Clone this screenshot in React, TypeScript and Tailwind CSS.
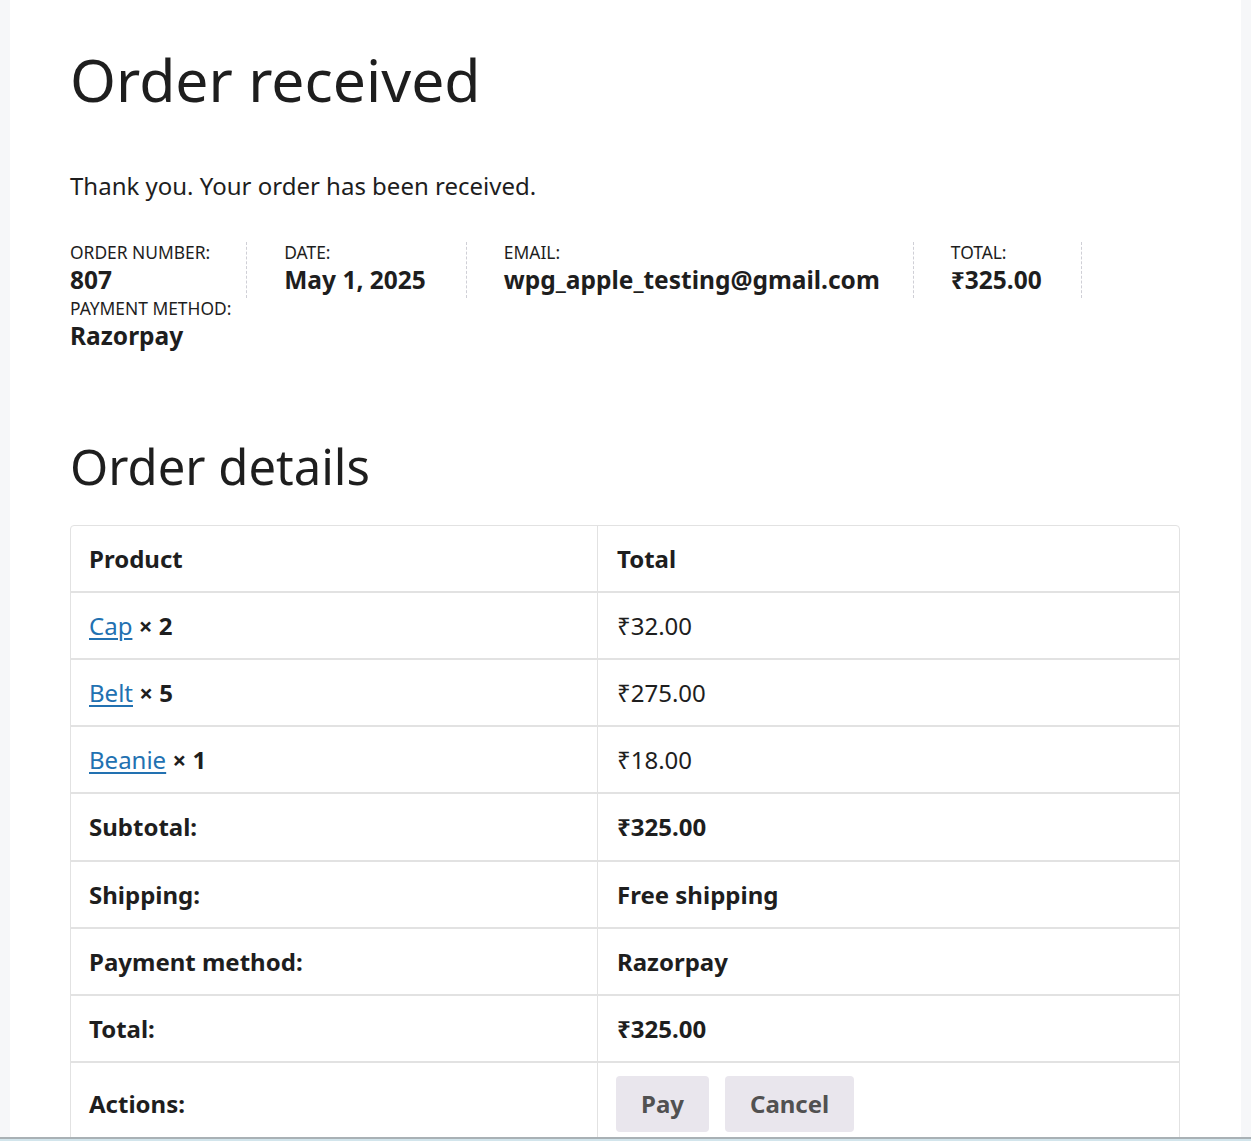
// Order received — WooCommerce-style thank-you page

const items = [
  { name: 'Cap', qty: 2, total: '₹32.00' },
  { name: 'Belt', qty: 5, total: '₹275.00' },
  { name: 'Beanie', qty: 1, total: '₹18.00' },
]

const totals = [
  { label: 'Subtotal:', value: '₹325.00', h: 'h-[68px]' },
  { label: 'Shipping:', value: 'Free shipping', h: 'h-[67px]' },
  { label: 'Payment method:', value: 'Razorpay', h: 'h-[67px]' },
  { label: 'Total:', value: '₹325.00', h: 'h-[67px]' },
]

const overview = [
  { label: 'Order number:', value: '807', space: 'pr-[36px] mr-[37px] border-r' },
  { label: 'Date:', value: 'May 1, 2025', space: 'pr-[40px] mr-[37px] border-r' },
  { label: 'Email:', value: 'wpg_apple_testing@gmail.com', space: 'pr-[33px] mr-[37px] border-r' },
  { label: 'Total:', value: '₹325.00', space: 'pr-[39px] mr-[37px] border-r' },
  { label: 'Payment method:', value: 'Razorpay', space: '' },
]

function OverviewItem({ label, value, space }: { label: string; value: string; space: string }) {
  return (
    <li className={'list-none border-dashed border-[#cfcfd6] ' + space}>
      <div className="text-[17.4px] leading-[20px] uppercase text-[#1e1e1e]">{label}</div>
      <div className="text-[24.5px] leading-[36px] font-bold text-[#1e1e1e]">{value}</div>
    </li>
  )
}

export default function App() {
  return (
    <div
      className="min-h-screen bg-[#f6f7f9] px-[10px] text-[#1e1e1e]"
      style={{ fontFamily: '"Noto Sans", "Open Sans", sans-serif' }}
    >
      <main className="bg-white min-h-screen pl-[60px] pr-[61px] pt-[44px] pb-10">
        <h1 className="text-[58.9px] leading-[70px] font-normal">Order received</h1>

        <p className="mt-[54px] text-[24px] leading-[36px]">Thank you. Your order has been received.</p>

        <ul className="mt-[38px] flex flex-wrap">
          {overview.map(o => (
            <OverviewItem key={o.label + o.value} {...o} />
          ))}
        </ul>

        <h2 className="mt-[83px] text-[49px] leading-[59px] font-normal">Order details</h2>

        <table className="mt-[29px] w-full border-separate border-spacing-0 border border-[#e2e2e2] rounded-[4px] text-[24px]">
          <thead>
            <tr>
              <th className="w-[526px] h-[65px] px-[18px] text-left font-bold">Product</th>
              <th className="h-[65px] px-[19px] text-left font-bold border-l border-[#e2e2e2]">Total</th>
            </tr>
          </thead>
          <tbody>
            {items.map(it => (
              <tr key={it.name}>
                <td className="h-[67px] px-[18px] border-t-2 border-[#e2e2e2]">
                  <a href="#" className="text-[#2271b1] underline decoration-[1.5px] underline-offset-[3px]">
                    {it.name}
                  </a>{' '}
                  <strong className="font-bold">× {it.qty}</strong>
                </td>
                <td className="h-[67px] px-[19px] border-t-2 border-l border-[#e2e2e2]">{it.total}</td>
              </tr>
            ))}
          </tbody>
          <tfoot>
            {totals.map(t => (
              <tr key={t.label}>
                <th className={t.h + ' px-[18px] text-left font-bold border-t-2 border-[#e2e2e2]'}>{t.label}</th>
                <td className={t.h + ' px-[19px] font-bold border-t-2 border-l border-[#e2e2e2]'}>{t.value}</td>
              </tr>
            ))}
            <tr>
              <th className="px-[18px] text-left font-bold border-t-2 border-[#e2e2e2]">Actions:</th>
              <td className="px-[18px] pt-[13px] pb-[13px] border-t-2 border-l border-[#e2e2e2]">
                <div className="flex gap-[16px]">
                  <button className="h-[56px] px-[25px] rounded-[4px] bg-[#e9e6ed] text-[#515151] font-bold">Pay</button>
                  <button className="h-[56px] px-[25px] rounded-[4px] bg-[#e9e6ed] text-[#515151] font-bold">Cancel</button>
                </div>
              </td>
            </tr>
          </tfoot>
        </table>
      </main>

      {/* bottom edge strip */}
      <div className="fixed left-0 right-0 bottom-0 h-[4px] border-t-2 border-[#a9b1b5] bg-[#d2e5ec]" />
    </div>
  )
}
